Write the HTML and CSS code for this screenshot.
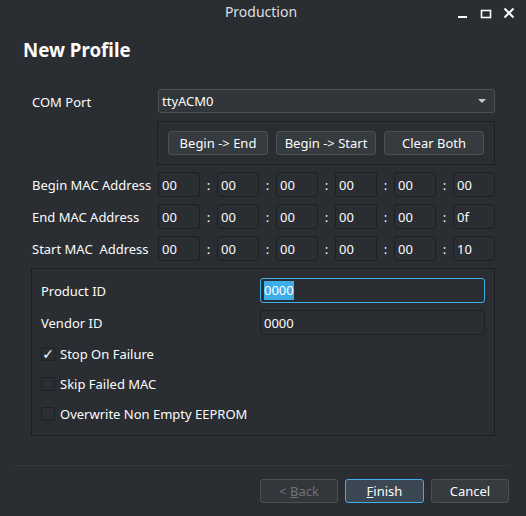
FILE: index.html
```html
<!DOCTYPE html>
<html>
<head>
<meta charset="utf-8">
<link rel="stylesheet" href="styles.css">
</head>
<body>
<div class="window">
  <div class="titlebar">
    <div></div>
    <div class="title">Production</div>
    <div class="controls">
      <svg class="ctl" width="12" height="12" viewBox="0 0 12 12"><rect x="1" y="9" width="9" height="2" fill="#fcfcfc"/></svg>
      <svg class="ctl" width="12" height="12" viewBox="0 0 12 12"><rect x="1.5" y="3.5" width="9" height="7" fill="none" stroke="#fcfcfc" stroke-width="1.6"/></svg>
      <svg class="ctl" width="12" height="12" viewBox="0 0 12 12"><path d="M1.5 1.5 L10.5 10.5 M10.5 1.5 L1.5 10.5" stroke="#fcfcfc" stroke-width="2"/></svg>
    </div>
  </div>

  <h1 class="heading">New Profile</h1>

  <div class="form">
    <div class="label">COM Port</div>
    <div class="combo"><span>ttyACM0</span><span class="arrow"></span></div>

    <div></div>
    <div class="frame">
      <button class="btn">Begin -&gt; End</button>
      <button class="btn">Begin -&gt; Start</button>
      <button class="btn">Clear Both</button>
    </div>

    <div class="label">Begin MAC Address</div>
    <div class="mac">
      <div class="field">00</div><span class="colon">:</span>
      <div class="field">00</div><span class="colon">:</span>
      <div class="field">00</div><span class="colon">:</span>
      <div class="field">00</div><span class="colon">:</span>
      <div class="field">00</div><span class="colon">:</span>
      <div class="field">00</div>
    </div>

    <div class="label">End MAC Address</div>
    <div class="mac">
      <div class="field">00</div><span class="colon">:</span>
      <div class="field">00</div><span class="colon">:</span>
      <div class="field">00</div><span class="colon">:</span>
      <div class="field">00</div><span class="colon">:</span>
      <div class="field">00</div><span class="colon">:</span>
      <div class="field">0f</div>
    </div>

    <div class="label">Start MAC&nbsp; Address</div>
    <div class="mac">
      <div class="field">00</div><span class="colon">:</span>
      <div class="field">00</div><span class="colon">:</span>
      <div class="field">00</div><span class="colon">:</span>
      <div class="field">00</div><span class="colon">:</span>
      <div class="field">00</div><span class="colon">:</span>
      <div class="field">10</div>
    </div>

    <div class="group">
      <div class="grow">
        <div class="glabel">Product ID</div>
        <div class="field wide focus"><span class="sel">0000</span></div>
      </div>
      <div class="grow">
        <div class="glabel">Vendor ID</div>
        <div class="field wide">0000</div>
      </div>
      <div class="check first"><span class="box">&#10003;</span><span>Stop On Failure</span></div>
      <div class="check"><span class="box"></span><span>Skip Failed MAC</span></div>
      <div class="check"><span class="box"></span><span>Overwrite Non Empty EEPROM</span></div>
    </div>
  </div>

  <div class="footer">
    <div class="sep"></div>
    <div class="buttons">
      <button class="btn fbtn disabled">&lt; <u>B</u>ack</button>
      <button class="btn fbtn default"><u>F</u>inish</button>
      <button class="btn fbtn">Cancel</button>
    </div>
  </div>
</div>
</body>
</html>
```
FILE: styles.css
```css
html, body {
  margin: 0;
  padding: 0;
  background: #2a2e32;
}
body {
  font-family: "Noto Sans", "DejaVu Sans", sans-serif;
  font-size: 13px;
  color: #fcfcfc;
}
.window {
  width: 526px;
  height: 516px;
  background: #2a2e32;
  display: flex;
  flex-direction: column;
  overflow: hidden;
}
.titlebar {
  height: 24px;
  display: grid;
  grid-template-columns: 1fr auto 1fr;
  align-items: center;
  flex: none;
}
.title {
  font-size: 14px;
  color: #dedfe0;
  line-height: 24px;
  margin-left: -4px;
}
.controls {
  display: flex;
  justify-content: flex-end;
  gap: 11px;
  padding-right: 11px;
  padding-top: 1px;
}
.heading {
  margin: 14px 0 0 23px;
  font-size: 18.7px;
  font-weight: bold;
  line-height: 24px;
  height: 24px;
}
.form {
  margin: 27px 0 0 31px;
  display: grid;
  grid-template-columns: 127px 337px;
  row-gap: 7px;
  align-items: center;
}
.label {
  padding-left: 1px;
  white-space: nowrap;
}
.combo {
  height: 24px;
  box-sizing: border-box;
  border: 1px solid #4a4f54;
  border-radius: 3px;
  background: #31363b;
  display: flex;
  align-items: center;
  justify-content: space-between;
  padding: 0 8px 0 3px;
  margin-bottom: 1px;
}
.arrow {
  width: 0;
  height: 0;
  border-left: 4px solid transparent;
  border-right: 4px solid transparent;
  border-top: 4px solid #c8c9ca;
}
.frame {
  height: 44px;
  box-sizing: border-box;
  margin-left: -1px;
  border: 1px solid #1c1f22;
  display: flex;
  align-items: center;
  gap: 8px;
  padding: 0 10px;
}
.btn {
  font-family: inherit;
  font-size: 13px;
  color: #fcfcfc;
  height: 24px;
  width: 100px;
  box-sizing: border-box;
  border: 1px solid #4b5055;
  border-radius: 3px;
  background: #363b40;
  padding: 0;
}
.mac {
  display: flex;
  align-items: center;
}
.field {
  width: 42px;
  height: 25px;
  box-sizing: border-box;
  border: 1px solid #1d2023;
  border-radius: 3px;
  background: #2a2e32;
  display: flex;
  align-items: center;
  padding-left: 3px;
}
.colon {
  width: 17px;
  text-align: center;
}
.group {
  grid-column: 1 / 3;
  box-sizing: border-box;
  height: 168px;
  border: 1px solid #1c1f22;
  padding: 9px 9px 0 9px;
  display: flex;
  flex-direction: column;
}
.grow {
  display: flex;
  align-items: center;
  margin-bottom: 7px;
}
.glabel {
  width: 219px;
}
.field.wide {
  width: 225px;
}
.focus {
  border-color: #3daee9;
}
.sel {
  background: #3daee9;
  color: #ffffff;
  line-height: 19px;
}
.check {
  height: 30px;
  display: flex;
  align-items: center;
  gap: 5px;
}
.check.first {
  margin-top: -3px;
}
.box {
  width: 14px;
  height: 14px;
  box-sizing: border-box;
  border: 1px solid #1d2023;
  border-radius: 2px;
  background: #2a2e32;
  display: flex;
  align-items: center;
  justify-content: center;
  font-size: 14px;
  font-weight: bold;
  line-height: 14px;
}
.footer {
  margin-top: auto;
  padding: 0 17px 13px 13px;
}
.sep {
  height: 1px;
  background: #33383d;
  margin-bottom: 13px;
}
.buttons {
  display: flex;
  justify-content: flex-end;
  gap: 7px;
}
.fbtn {
  width: 78px;
}
.fbtn u {
  text-decoration-thickness: 1px;
}
.disabled {
  color: #6f7276;
  background: #33373c;
}
.default {
  width: 79px;
  border-color: #3daee9;
  background: #3b4752;
}
```
